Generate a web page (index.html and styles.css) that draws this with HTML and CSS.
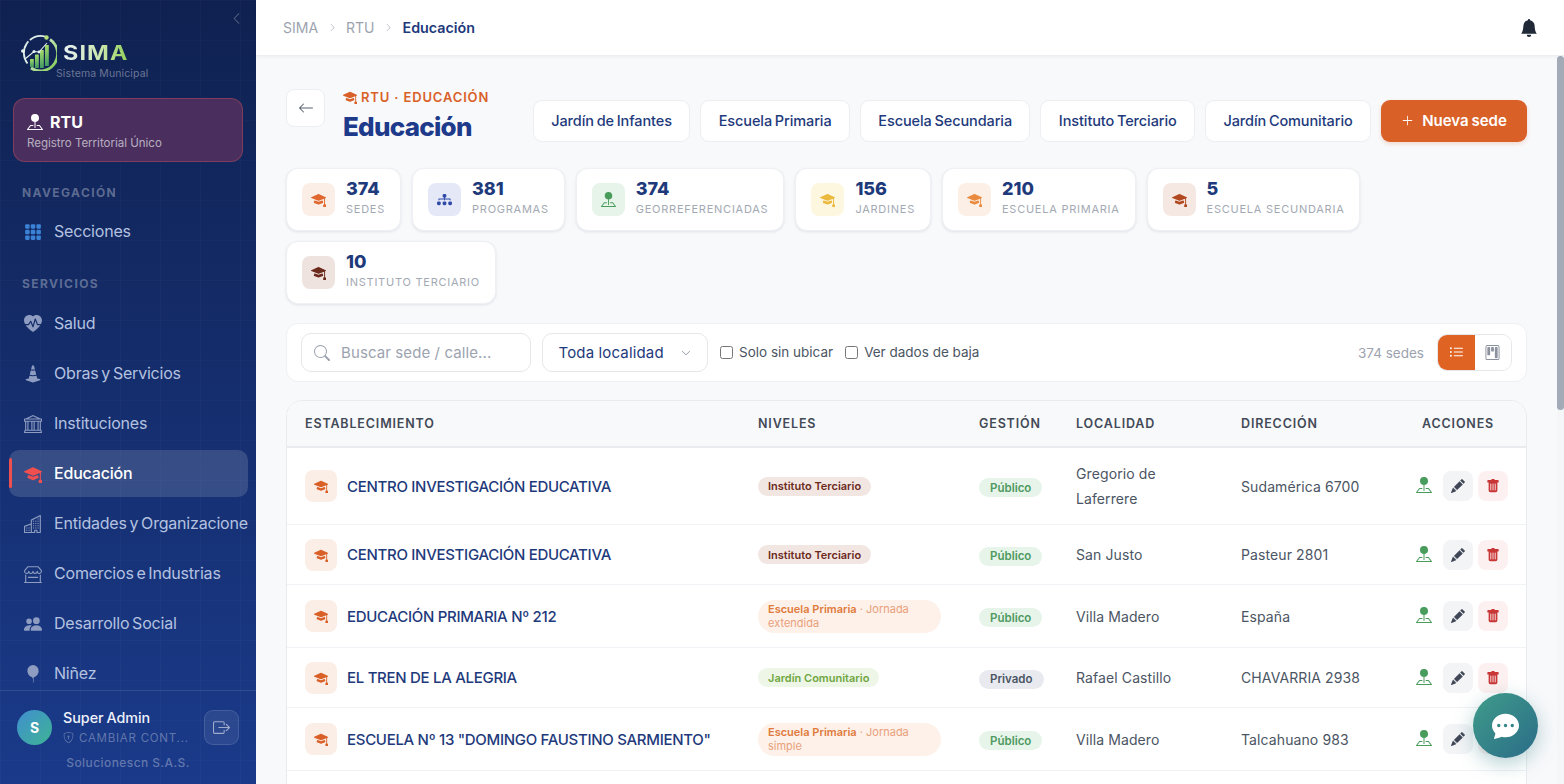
FILE: index.html
```html
<!DOCTYPE html>
<html lang="es">
<head>
<meta charset="utf-8">
<title>SIMA - Educación</title>
<link rel="stylesheet" href="styles.css">
</head>
<body>
<svg class="sprite" xmlns="http://www.w3.org/2000/svg" aria-hidden="true">
<defs>
<symbol id="i-cap" viewBox="0 0 16 16"><path d="M8.211 2.047a.5.5 0 0 0-.422 0l-7.5 3.5a.5.5 0 0 0 .025.917l7.5 3a.5.5 0 0 0 .372 0L14 7.14V13a1 1 0 0 0-1 1v2h3v-2a1 1 0 0 0-1-1V6.739l.686-.275a.5.5 0 0 0 .025-.917z"/><path d="M4.176 9.032a.5.5 0 0 0-.656.327l-.5 1.7a.5.5 0 0 0 .294.605l4.5 1.8a.5.5 0 0 0 .372 0l4.5-1.8a.5.5 0 0 0 .294-.605l-.5-1.7a.5.5 0 0 0-.656-.327L8 10.466z"/></symbol>
<symbol id="i-pin" viewBox="0 0 16 16"><path fill-rule="evenodd" d="M3.1 11.2a.5.5 0 0 1 .4-.2H6a.5.5 0 0 1 0 1H3.75L1.5 15h13l-2.25-3H10a.5.5 0 0 1 0-1h2.5a.5.5 0 0 1 .4.2l3 4a.5.5 0 0 1-.4.8H.5a.5.5 0 0 1-.4-.8z"/><path fill-rule="evenodd" d="M4 4a4 4 0 1 1 4.5 3.969V13.5a.5.5 0 0 1-1 0V7.97A4 4 0 0 1 4 3.999z"/></symbol>
<symbol id="i-pencil" viewBox="0 0 16 16"><path d="M12.854.146a.5.5 0 0 0-.707 0L10.5 1.793 14.207 5.5l1.647-1.646a.5.5 0 0 0 0-.708zm.646 6.061L9.793 2.5 3.293 9H3.5a.5.5 0 0 1 .5.5v.5h.5a.5.5 0 0 1 .5.5v.5h.5a.5.5 0 0 1 .5.5v.5h.5a.5.5 0 0 1 .5.5v.207zm-7.468 7.468A.5.5 0 0 1 6 13.5V13h-.5a.5.5 0 0 1-.5-.5V12h-.5a.5.5 0 0 1-.5-.5V11h-.5a.5.5 0 0 1-.5-.5V10h-.5a.5.5 0 0 1-.175-.032l-.179.178a.5.5 0 0 0-.11.168l-2 5a.5.5 0 0 0 .65.65l5-2a.5.5 0 0 0 .168-.11z"/></symbol>
<symbol id="i-trash" viewBox="0 0 16 16"><path d="M2.5 1a1 1 0 0 0-1 1v1a1 1 0 0 0 1 1H3v9a2 2 0 0 0 2 2h6a2 2 0 0 0 2-2V4h.5a1 1 0 0 0 1-1V2a1 1 0 0 0-1-1H10a1 1 0 0 0-1-1H7a1 1 0 0 0-1 1zm3 4a.5.5 0 0 1 .5.5v7a.5.5 0 0 1-1 0v-7a.5.5 0 0 1 .5-.5M8 5a.5.5 0 0 1 .5.5v7a.5.5 0 0 1-1 0v-7A.5.5 0 0 1 8 5m3 .5v7a.5.5 0 0 1-1 0v-7a.5.5 0 0 1 1 0"/></symbol>
<symbol id="i-bell" viewBox="0 0 16 16"><path d="M8 16a2 2 0 0 0 2-2H6a2 2 0 0 0 2 2m.995-14.901a1 1 0 1 0-1.99 0A5 5 0 0 0 3 6c0 1.098-.5 6-2 7h14c-1.5-1-2-5.902-2-7 0-2.42-1.72-4.44-4.005-4.901"/></symbol>
<symbol id="i-grid" viewBox="0 0 16 16"><rect x="1" y="1" width="4" height="4" rx="1"/><rect x="6" y="1" width="4" height="4" rx="1"/><rect x="11" y="1" width="4" height="4" rx="1"/><rect x="1" y="6" width="4" height="4" rx="1"/><rect x="6" y="6" width="4" height="4" rx="1"/><rect x="11" y="6" width="4" height="4" rx="1"/><rect x="1" y="11" width="4" height="4" rx="1"/><rect x="6" y="11" width="4" height="4" rx="1"/><rect x="11" y="11" width="4" height="4" rx="1"/></symbol>
<symbol id="i-heart" viewBox="0 0 16 16"><path d="M1.475 9C2.702 10.84 4.779 12.871 8 15c3.221-2.129 5.298-4.16 6.525-6H12a.5.5 0 0 1-.464-.314l-1.457-3.642-1.598 5.593a.5.5 0 0 1-.945.049L5.889 6.568l-1.473 2.21A.5.5 0 0 1 4 9z"/><path d="M.88 8C-2.427 1.68 4.41-2 7.823 1.143q.09.083.176.171a3 3 0 0 1 .176-.17C11.59-2 18.426 1.68 15.12 8h-2.783l-1.874-4.686a.5.5 0 0 0-.945.049L7.921 8.956 6.464 5.314a.5.5 0 0 0-.88-.091L3.732 8z"/></symbol>
<symbol id="i-cone" viewBox="0 0 16 16"><path d="m9.97 4.88.953 3.811C10.159 8.88 9.14 9 8 9s-2.158-.12-2.923-.309L6.03 4.88C6.635 4.957 7.3 5 8 5s1.365-.043 1.97-.12m-.245-.978L8.97.88C8.718-.13 7.282-.13 7.03.88L6.275 3.9C6.8 3.965 7.382 4 8 4s1.2-.036 1.725-.098m4.396 8.613a.5.5 0 0 1 .037.96l-6 2a.5.5 0 0 1-.316 0l-6-2a.5.5 0 0 1 .037-.96l2.391-.598.565-2.257c.862.212 1.964.339 3.165.339s2.303-.127 3.165-.339l.565 2.257z"/></symbol>
<symbol id="i-bank" viewBox="0 0 16 16"><path d="m8 0 6.61 3h.89a.5.5 0 0 1 .5.5v2a.5.5 0 0 1-.5.5H15v7a.5.5 0 0 1 .485.38l.5 2a.498.498 0 0 1-.485.62H.5a.498.498 0 0 1-.485-.62l.5-2A.5.5 0 0 1 1 13V6H.5a.5.5 0 0 1-.5-.5v-2A.5.5 0 0 1 .5 3h.89zM3.777 3h8.447L8 1zM2 6v7h1V6zm2 0v7h2.5V6zm3.5 0v7h1V6zm2 0v7H12V6zM13 6v7h1V6zm2-1V4H1v1zm-.39 9H1.39l-.25 1h13.72z"/></symbol>
<symbol id="i-buildings" viewBox="0 0 16 16"><path d="M14.763.075A.5.5 0 0 1 15 .5v15a.5.5 0 0 1-.5.5h-3a.5.5 0 0 1-.5-.5V14h-1v1.5a.5.5 0 0 1-.5.5h-9a.5.5 0 0 1-.5-.5V10a.5.5 0 0 1 .342-.474L6 7.64V4.5a.5.5 0 0 1 .276-.447l8-4a.5.5 0 0 1 .487.022M6 8.694 1 10.36V15h5zM7 15h2v-1.5a.5.5 0 0 1 .5-.5h2a.5.5 0 0 1 .5.5V15h2V1.309l-7 3.5z"/><path d="M2 11h1v1H2zm2 0h1v1H4zm-2 2h1v1H2zm2 0h1v1H4zm4-4h1v1H8zm2 0h1v1h-1zm-2 2h1v1H8zm2 0h1v1h-1zm2-2h1v1h-1zm0 2h1v1h-1zM8 7h1v1H8zm2 0h1v1h-1zm2 0h1v1h-1zM8 5h1v1H8zm2 0h1v1h-1zm2 0h1v1h-1zm0-2h1v1h-1z"/></symbol>
<symbol id="i-shop" viewBox="0 0 16 16"><path d="M2.97 1.35A1 1 0 0 1 3.73 1h8.54a1 1 0 0 1 .76.35l2.609 3.044A1.5 1.5 0 0 1 16 5.37v.255a2.375 2.375 0 0 1-4.25 1.458A2.37 2.37 0 0 1 9.875 8 2.37 2.37 0 0 1 8 7.083 2.37 2.37 0 0 1 6.125 8a2.37 2.37 0 0 1-1.875-.917A2.375 2.375 0 0 1 0 5.625V5.37a1.5 1.5 0 0 1 .361-.976zm1.78 4.275a1.375 1.375 0 0 0 2.75 0 .5.5 0 0 1 1 0 1.375 1.375 0 0 0 2.75 0 .5.5 0 0 1 1 0 1.375 1.375 0 1 0 2.75 0V5.37a.5.5 0 0 0-.12-.325L12.27 2H3.73L1.12 5.045A.5.5 0 0 0 1 5.37v.255a1.375 1.375 0 0 0 2.75 0 .5.5 0 0 1 1 0M1.5 8.5A.5.5 0 0 1 2 9v6h12V9a.5.5 0 0 1 1 0v6h.5a.5.5 0 0 1 0 1H.5a.5.5 0 0 1 0-1H1V9a.5.5 0 0 1 .5-.5"/><path d="M3.5 10.5h9v1h-9z"/></symbol>
<symbol id="i-people" viewBox="0 0 16 16"><path d="M7 14s-1 0-1-1 1-4 5-4 5 3 5 4-1 1-1 1zm4-6a3 3 0 1 0 0-6 3 3 0 0 0 0 6m-5.784 6A2.24 2.24 0 0 1 5 13c0-1.355.68-2.75 1.936-3.72A6.3 6.3 0 0 0 5 9c-4 0-5 3-5 4s1 1 1 1zM4.5 8a2.5 2.5 0 1 0 0-5 2.5 2.5 0 0 0 0 5"/></symbol>
<symbol id="i-balloon" viewBox="0 0 16 16"><path fill-rule="evenodd" d="M8.48 10.901C11.21 10.227 13 7.837 13 5A5 5 0 0 0 3 5c0 2.837 1.79 5.227 4.52 5.901l-.244.487a.25.25 0 1 0 .448.224l.04-.08c.009.17.024.315.051.45.068.344.208.622.448 1.102l.013.028c.212.422.182.85.05 1.246-.135.402-.366.751-.534 1.003a.25.25 0 0 0 .416.278l.004-.007c.166-.248.431-.646.588-1.115.16-.479.212-1.051-.076-1.629-.258-.515-.365-.732-.419-1.004a2 2 0 0 1-.037-.289l.008.017a.25.25 0 1 0 .448-.224z"/></symbol>
<symbol id="i-diagram" viewBox="0 0 16 16"><path fill-rule="evenodd" d="M6 3.5A1.5 1.5 0 0 1 7.5 2h1A1.5 1.5 0 0 1 10 3.5v1A1.5 1.5 0 0 1 8.5 6v1H14a.5.5 0 0 1 .5.5v1a.5.5 0 0 1-1 0V8h-5v.5a.5.5 0 0 1-1 0V8h-5v.5a.5.5 0 0 1-1 0v-1A.5.5 0 0 1 2 7h5.5V6A1.5 1.5 0 0 1 6 4.5zm-6 8A1.5 1.5 0 0 1 1.5 10h1A1.5 1.5 0 0 1 4 11.5v1A1.5 1.5 0 0 1 2.5 14h-1A1.5 1.5 0 0 1 0 12.5zm6 0A1.5 1.5 0 0 1 7.5 10h1a1.5 1.5 0 0 1 1.5 1.5v1A1.5 1.5 0 0 1 8.5 14h-1A1.5 1.5 0 0 1 6 12.5zm6 0a1.5 1.5 0 0 1 1.5-1.5h1a1.5 1.5 0 0 1 1.5 1.5v1a1.5 1.5 0 0 1-1.5 1.5h-1a1.5 1.5 0 0 1-1.5-1.5z"/></symbol>
<symbol id="i-list" viewBox="0 0 16 16"><path fill-rule="evenodd" d="M5 11.5a.5.5 0 0 1 .5-.5h9a.5.5 0 0 1 0 1h-9a.5.5 0 0 1-.5-.5m0-4a.5.5 0 0 1 .5-.5h9a.5.5 0 0 1 0 1h-9a.5.5 0 0 1-.5-.5m0-4a.5.5 0 0 1 .5-.5h9a.5.5 0 0 1 0 1h-9a.5.5 0 0 1-.5-.5m-3 1a1 1 0 1 0 0-2 1 1 0 0 0 0 2m0 4a1 1 0 1 0 0-2 1 1 0 0 0 0 2m0 4a1 1 0 1 0 0-2 1 1 0 0 0 0 2"/></symbol>
<symbol id="i-kanban" viewBox="0 0 16 16"><path d="M13.5 1a1 1 0 0 1 1 1v12a1 1 0 0 1-1 1h-11a1 1 0 0 1-1-1V2a1 1 0 0 1 1-1zm-11-1a2 2 0 0 0-2 2v12a2 2 0 0 0 2 2h11a2 2 0 0 0 2-2V2a2 2 0 0 0-2-2z"/><path d="M6.5 3a1 1 0 0 1 1-1h1a1 1 0 0 1 1 1v3a1 1 0 0 1-1 1h-1a1 1 0 0 1-1-1zm-4 0a1 1 0 0 1 1-1h1a1 1 0 0 1 1 1v7a1 1 0 0 1-1 1h-1a1 1 0 0 1-1-1zm8 0a1 1 0 0 1 1-1h1a1 1 0 0 1 1 1v10a1 1 0 0 1-1 1h-1a1 1 0 0 1-1-1z"/></symbol>
<symbol id="i-logout" viewBox="0 0 16 16"><path fill-rule="evenodd" d="M10 12.5a.5.5 0 0 1-.5.5h-8a.5.5 0 0 1-.5-.5v-9a.5.5 0 0 1 .5-.5h8a.5.5 0 0 1 .5.5v2a.5.5 0 0 0 1 0v-2A1.5 1.5 0 0 0 9.5 2h-8A1.5 1.5 0 0 0 0 3.5v9A1.5 1.5 0 0 0 1.5 14h8a1.5 1.5 0 0 0 1.5-1.5v-2a.5.5 0 0 0-1 0z"/><path fill-rule="evenodd" d="M15.854 8.354a.5.5 0 0 0 0-.708l-3-3a.5.5 0 0 0-.708.708L14.293 7.5H5.5a.5.5 0 0 0 0 1h8.793l-2.147 2.146a.5.5 0 0 0 .708.708z"/></symbol>
<symbol id="i-shield" viewBox="0 0 16 16"><path d="M5.338 1.59a61 61 0 0 0-2.837.856.48.48 0 0 0-.328.39c-.554 4.157.726 7.19 2.253 9.188a10.7 10.7 0 0 0 2.287 2.233c.346.244.652.42.893.533q.18.085.293.118a1 1 0 0 0 .101.025 1 1 0 0 0 .1-.025q.114-.034.294-.118c.24-.113.547-.29.893-.533a10.7 10.7 0 0 0 2.287-2.233c1.527-1.997 2.807-5.031 2.253-9.188a.48.48 0 0 0-.328-.39c-.651-.213-1.75-.56-2.837-.855C9.552 1.29 8.531 1.067 8 1.067c-.53 0-1.552.223-2.662.524zM5.072.56C6.157.265 7.31 0 8 0s1.843.265 2.928.56c1.11.3 2.229.655 2.887.87a1.54 1.54 0 0 1 1.044 1.262c.596 4.477-.787 7.795-2.465 9.99a11.8 11.8 0 0 1-2.517 2.453 7 7 0 0 1-1.048.625c-.28.132-.581.24-.829.24s-.548-.108-.829-.24a7 7 0 0 1-1.048-.625 11.8 11.8 0 0 1-2.517-2.453C1.928 10.487.545 7.169 1.141 2.692A1.54 1.54 0 0 1 2.185 1.43 63 63 0 0 1 5.072.56"/><path d="M9.5 6.5a1.5 1.5 0 0 1-1 1.415l.385 1.99a.5.5 0 0 1-.491.595h-.788a.5.5 0 0 1-.49-.595l.384-1.99a1.5 1.5 0 1 1 2-1.415"/></symbol>
<symbol id="i-chat" viewBox="0 0 16 16"><path d="M16 8c0 3.866-3.582 7-8 7a9 9 0 0 1-2.347-.306c-.584.296-1.925.864-4.181 1.234-.2.032-.352-.176-.273-.362.354-.836.674-1.95.77-2.966C.744 11.37 0 9.76 0 8c0-3.866 3.582-7 8-7s8 3.134 8 7M5 8a1 1 0 1 0-2 0 1 1 0 0 0 2 0m4 0a1 1 0 1 0-2 0 1 1 0 0 0 2 0m3 1a1 1 0 1 0 0-2 1 1 0 0 0 0 2"/></symbol>
<symbol id="i-back" viewBox="0 0 16 16"><path fill-rule="evenodd" d="M15 8a.5.5 0 0 0-.5-.5H2.707l3.147-3.146a.5.5 0 1 0-.708-.708l-4 4a.5.5 0 0 0 0 .708l4 4a.5.5 0 0 0 .708-.708L2.707 8.5H14.5A.5.5 0 0 0 15 8"/></symbol>
<symbol id="i-plus" viewBox="0 0 16 16"><path fill-rule="evenodd" d="M8 2a.5.5 0 0 1 .5.5v5h5a.5.5 0 0 1 0 1h-5v5a.5.5 0 0 1-1 0v-5h-5a.5.5 0 0 1 0-1h5v-5A.5.5 0 0 1 8 2"/></symbol>
<symbol id="i-search" viewBox="0 0 16 16"><path d="M11.742 10.344a6.5 6.5 0 1 0-1.397 1.398h-.001q.044.06.098.115l3.85 3.85a1 1 0 0 0 1.415-1.414l-3.85-3.85a1 1 0 0 0-.115-.1zM12 6.5a5.5 5.5 0 1 1-11 0 5.5 5.5 0 0 1 11 0"/></symbol>
<symbol id="i-left" viewBox="0 0 16 16"><path fill-rule="evenodd" d="M11.354 1.646a.5.5 0 0 1 0 .708L5.707 8l5.647 5.646a.5.5 0 0 1-.708.708l-6-6a.5.5 0 0 1 0-.708l6-6a.5.5 0 0 1 .708 0"/></symbol>
<symbol id="i-right" viewBox="0 0 16 16"><path fill-rule="evenodd" d="M4.646 1.646a.5.5 0 0 1 .708 0l6 6a.5.5 0 0 1 0 .708l-6 6a.5.5 0 0 1-.708-.708L10.293 8 4.646 2.354a.5.5 0 0 1 0-.708"/></symbol>
<symbol id="i-down" viewBox="0 0 16 16"><path fill-rule="evenodd" d="M1.646 4.646a.5.5 0 0 1 .708 0L8 10.293l5.646-5.647a.5.5 0 0 1 .708.708l-6 6a.5.5 0 0 1-.708 0l-6-6a.5.5 0 0 1 0-.708"/></symbol>
</defs>
</svg>

<div class="app">
<aside class="sidebar">
  <div class="side-top">
    <button class="collapse"><svg class="ico"><use href="#i-left"/></svg></button>
    <div class="brand">
      <svg class="brand-mark" viewBox="0 0 36 38" xmlns="http://www.w3.org/2000/svg">
        <defs><linearGradient id="ringg" x1="0" y1="0" x2="1" y2="1"><stop offset="0" stop-color="#e6f3ee"/><stop offset="1" stop-color="#7cc84a"/></linearGradient><linearGradient id="barg" x1="0" y1="0" x2="0" y2="1"><stop offset="0" stop-color="#a6dc6a"/><stop offset="1" stop-color="#3f9a63"/></linearGradient></defs>
        <path d="M6.5 30.5A17 17 0 0 1 24 3.5" fill="none" stroke="#dfeee8" stroke-width="1.8" stroke-dasharray="24 2 40"/>
        <path d="M29 6.5A17 17 0 0 1 10 35" fill="none" stroke="url(#ringg)" stroke-width="2.8"/>
        <circle cx="25.5" cy="4.5" r="2.2" fill="#b7e07a"/><circle cx="1.8" cy="18" r="1.8" fill="#e6f3ee"/>
        <rect x="9" y="26" width="3.8" height="8" rx=".5" fill="url(#barg)"/>
        <rect x="14" y="21.5" width="3.8" height="13.5" rx=".5" fill="url(#barg)"/>
        <rect x="19" y="17" width="3.8" height="18" rx=".5" fill="url(#barg)"/>
        <rect x="24" y="12" width="3.8" height="21" rx=".5" fill="url(#barg)"/>
        <path d="M4 26 13 18.5l5 .5 8-9" fill="none" stroke="#e6f3ee" stroke-width="1.1"/>
        <circle cx="13" cy="18.5" r="1.5" fill="#e6f3ee"/><circle cx="18" cy="19" r="1.4" fill="#e6f3ee"/>
      </svg>
      <div class="brand-text">
        <span class="brand-name">SIMA</span>
        <span class="brand-sub">Sistema Municipal</span>
      </div>
    </div>
  </div>
  <div class="rtu-box">
    <div class="rtu-title"><svg class="ico rtu-ico"><use href="#i-pin"/></svg>RTU</div>
    <div class="rtu-sub">Registro Territorial Único</div>
  </div>
  <nav class="nav">
    <div class="nav-label">NAVEGACIÓN</div>
    <a class="nav-item"><svg class="ico nav-ico grid-ico"><use href="#i-grid"/></svg>Secciones</a>
    <div class="nav-label services">SERVICIOS</div>
    <div class="nav-list">
      <a class="nav-item"><svg class="ico nav-ico"><use href="#i-heart"/></svg>Salud</a>
      <a class="nav-item"><svg class="ico nav-ico"><use href="#i-cone"/></svg>Obras y Servicios</a>
      <a class="nav-item"><svg class="ico nav-ico"><use href="#i-bank"/></svg>Instituciones</a>
      <a class="nav-item active"><svg class="ico nav-ico"><use href="#i-cap"/></svg>Educación</a>
      <a class="nav-item"><svg class="ico nav-ico"><use href="#i-buildings"/></svg>Entidades y Organizaciones</a>
      <a class="nav-item"><svg class="ico nav-ico"><use href="#i-shop"/></svg>Comercios e Industrias</a>
      <a class="nav-item"><svg class="ico nav-ico"><use href="#i-people"/></svg>Desarrollo Social</a>
      <a class="nav-item"><svg class="ico nav-ico"><use href="#i-balloon"/></svg>Niñez</a>
    </div>
  </nav>
  <div class="side-foot">
    <div class="user-row">
      <div class="avatar">S</div>
      <div class="user-info">
        <div class="user-name">Super Admin</div>
        <div class="user-pass"><svg class="ico"><use href="#i-shield"/></svg><span>CAMBIAR CONT...</span></div>
      </div>
      <button class="logout"><svg class="ico"><use href="#i-logout"/></svg></button>
    </div>
    <div class="company">Solucionescn S.A.S.</div>
  </div>
</aside>

<div class="main">
  <header class="topbar">
    <div class="crumbs">
      <span>SIMA</span><svg class="ico"><use href="#i-right"/></svg>
      <span>RTU</span><svg class="ico"><use href="#i-right"/></svg>
      <span class="crumb-now">Educación</span>
    </div>
    <svg class="ico bell"><use href="#i-bell"/></svg>
  </header>

  <div class="scroller">
  <main class="content">
    <div class="page-head">
      <button class="back"><svg class="ico"><use href="#i-back"/></svg></button>
      <div class="titles">
        <div class="eyebrow"><svg class="ico"><use href="#i-cap"/></svg>RTU · EDUCACIÓN</div>
        <h1>Educación</h1>
      </div>
      <div class="chips">
        <button class="chip">Jardín de Infantes</button>
        <button class="chip">Escuela Primaria</button>
        <button class="chip">Escuela Secundaria</button>
        <button class="chip">Instituto Terciario</button>
        <button class="chip">Jardín Comunitario</button>
        <button class="primary"><svg class="ico"><use href="#i-plus"/></svg>Nueva sede</button>
      </div>
    </div>

    <section class="stats">
      <div class="stat"><div class="stat-ico c-orange"><svg class="ico"><use href="#i-cap"/></svg></div><div class="stat-text"><div class="stat-num">374</div><div class="stat-lbl">SEDES</div></div></div>
      <div class="stat"><div class="stat-ico c-blue"><svg class="ico"><use href="#i-diagram"/></svg></div><div class="stat-text"><div class="stat-num">381</div><div class="stat-lbl">PROGRAMAS</div></div></div>
      <div class="stat"><div class="stat-ico c-green"><svg class="ico"><use href="#i-pin"/></svg></div><div class="stat-text"><div class="stat-num">374</div><div class="stat-lbl">GEORREFERENCIADAS</div></div></div>
      <div class="stat"><div class="stat-ico c-yellow"><svg class="ico"><use href="#i-cap"/></svg></div><div class="stat-text"><div class="stat-num">156</div><div class="stat-lbl">JARDINES</div></div></div>
      <div class="stat"><div class="stat-ico c-peach"><svg class="ico"><use href="#i-cap"/></svg></div><div class="stat-text"><div class="stat-num">210</div><div class="stat-lbl">ESCUELA PRIMARIA</div></div></div>
      <div class="stat"><div class="stat-ico c-rust"><svg class="ico"><use href="#i-cap"/></svg></div><div class="stat-text"><div class="stat-num">5</div><div class="stat-lbl">ESCUELA SECUNDARIA</div></div></div>
      <div class="stat"><div class="stat-ico c-brown"><svg class="ico"><use href="#i-cap"/></svg></div><div class="stat-text"><div class="stat-num">10</div><div class="stat-lbl">INSTITUTO TERCIARIO</div></div></div>
    </section>

    <section class="filters">
      <label class="search"><svg class="ico"><use href="#i-search"/></svg><input type="text" placeholder="Buscar sede / calle..."></label>
      <div class="select"><span>Toda localidad</span><svg class="ico"><use href="#i-down"/></svg></div>
      <label class="check"><input type="checkbox">Solo sin ubicar</label>
      <label class="check"><input type="checkbox">Ver dados de baja</label>
      <span class="count">374 sedes</span>
      <div class="toggle"><button class="tg on"><svg class="ico"><use href="#i-list"/></svg></button><button class="tg"><svg class="ico"><use href="#i-kanban"/></svg></button></div>
    </section>

    <section class="table-card">
      <table>
        <colgroup><col class="c1"><col class="c2"><col class="c3"><col class="c4"><col class="c5"><col class="c6"></colgroup>
        <thead><tr><th>ESTABLECIMIENTO</th><th>NIVELES</th><th>GESTIÓN</th><th>LOCALIDAD</th><th>DIRECCIÓN</th><th>ACCIONES</th></tr></thead>
        <tbody>
          <tr>
            <td><div class="est"><span class="est-ico"><svg class="ico"><use href="#i-cap"/></svg></span><span class="est-name">CENTRO INVESTIGACIÓN EDUCATIVA</span></div></td>
            <td><div class="lvl-wrap"><span class="badge b-ter">Instituto Terciario</span></div></td>
            <td><span class="badge b-pub">Público</span></td>
            <td class="tight">Gregorio de Laferrere</td>
            <td>Sudamérica 6700</td>
            <td class="acts"><div class="act-row"><svg class="ico act-pin"><use href="#i-pin"/></svg><button class="act edit"><svg class="ico"><use href="#i-pencil"/></svg></button><button class="act del"><svg class="ico"><use href="#i-trash"/></svg></button></div></td>
          </tr>
          <tr>
            <td><div class="est"><span class="est-ico"><svg class="ico"><use href="#i-cap"/></svg></span><span class="est-name">CENTRO INVESTIGACIÓN EDUCATIVA</span></div></td>
            <td><div class="lvl-wrap"><span class="badge b-ter">Instituto Terciario</span></div></td>
            <td><span class="badge b-pub">Público</span></td>
            <td>San Justo</td>
            <td>Pasteur 2801</td>
            <td class="acts"><div class="act-row"><svg class="ico act-pin"><use href="#i-pin"/></svg><button class="act edit"><svg class="ico"><use href="#i-pencil"/></svg></button><button class="act del"><svg class="ico"><use href="#i-trash"/></svg></button></div></td>
          </tr>
          <tr>
            <td><div class="est"><span class="est-ico"><svg class="ico"><use href="#i-cap"/></svg></span><span class="est-name">EDUCACIÓN PRIMARIA Nº 212</span></div></td>
            <td><div class="lvl-wrap"><span class="badge b-pri"><b>Escuela Primaria</b> · Jornada extendida</span></div></td>
            <td><span class="badge b-pub">Público</span></td>
            <td>Villa Madero</td>
            <td>España</td>
            <td class="acts"><div class="act-row"><svg class="ico act-pin"><use href="#i-pin"/></svg><button class="act edit"><svg class="ico"><use href="#i-pencil"/></svg></button><button class="act del"><svg class="ico"><use href="#i-trash"/></svg></button></div></td>
          </tr>
          <tr>
            <td><div class="est"><span class="est-ico"><svg class="ico"><use href="#i-cap"/></svg></span><span class="est-name">EL TREN DE LA ALEGRIA</span></div></td>
            <td><div class="lvl-wrap"><span class="badge b-jar">Jardín Comunitario</span></div></td>
            <td><span class="badge b-pri2">Privado</span></td>
            <td>Rafael Castillo</td>
            <td>CHAVARRIA 2938</td>
            <td class="acts"><div class="act-row"><svg class="ico act-pin"><use href="#i-pin"/></svg><button class="act edit"><svg class="ico"><use href="#i-pencil"/></svg></button><button class="act del"><svg class="ico"><use href="#i-trash"/></svg></button></div></td>
          </tr>
          <tr>
            <td><div class="est"><span class="est-ico"><svg class="ico"><use href="#i-cap"/></svg></span><span class="est-name">ESCUELA Nº 13 "DOMINGO FAUSTINO SARMIENTO"</span></div></td>
            <td><div class="lvl-wrap"><span class="badge b-pri"><b>Escuela Primaria</b> · Jornada simple</span></div></td>
            <td><span class="badge b-pub">Público</span></td>
            <td>Villa Madero</td>
            <td>Talcahuano 983</td>
            <td class="acts"><div class="act-row"><svg class="ico act-pin"><use href="#i-pin"/></svg><button class="act edit"><svg class="ico"><use href="#i-pencil"/></svg></button><button class="act del"><svg class="ico"><use href="#i-trash"/></svg></button></div></td>
          </tr>
        </tbody>
      </table>
    </section>
  </main>
  <div class="rail"><div class="thumb"></div></div>
  </div>
</div>
</div>
<button class="fab"><svg class="ico"><use href="#i-chat"/></svg></button>
</body>
</html>
```

FILE: styles.css
```css
* { box-sizing: border-box; }
html, body { margin: 0; height: 100%; overflow: hidden; }
body { font-family: "Inter", "Liberation Sans", sans-serif; color: #1e3a7b; background: #f8f9fb; }
button { font: inherit; cursor: pointer; }
.sprite { width: 0; height: 0; position: absolute; }
.ico { width: 1em; height: 1em; fill: currentColor; flex: none; display: block; }

.app { display: flex; height: 100vh; }

/* Sidebar */
.sidebar {
  width: 256px; flex: none; display: flex; flex-direction: column; overflow: hidden;
  background-color: #122758;
  background-image:
    linear-gradient(rgba(255,255,255,.02) 1px, transparent 1px),
    linear-gradient(90deg, rgba(255,255,255,.02) 1px, transparent 1px),
    linear-gradient(180deg, #0f2150 0%, #1a3a8a 100%);
  background-size: 40px 40px, 40px 40px, 100% 100%;
}
.side-top { height: 98px; flex: none; padding: 10px 13px 0 21px; }
.collapse { display: block; margin-left: auto; padding: 0; background: none; border: 0; color: rgba(255,255,255,.3); font-size: 13px; height: 16px; width: 13px; }
.brand { display: flex; margin-top: 7px; align-items: flex-start; }
.brand-mark { width: 36px; height: 38px; flex: none; }
.brand-text { display: flex; flex-direction: column; margin-left: -1px; }
.brand-name {
  font-size: 19.5px; line-height: 26px; font-weight: 700; letter-spacing: .9px; margin: 7px 0 0 7px;
  background: linear-gradient(90deg, #e8f1f5 0%, #c9e6a8 60%, #8fcf55 100%);
  -webkit-background-clip: text; background-clip: text; color: transparent; align-self: flex-start;
  transform: scaleX(1.2); transform-origin: left center;
}
.brand-sub { font-size: 10.5px; line-height: 14px; letter-spacing: .12px; margin-top: 1px; color: rgba(255,255,255,.38); white-space: nowrap; }

.rtu-box { flex: none; margin: 0 13px; height: 64px; padding: 12px 13px 0; border-radius: 12px; background: #4a2f5e; border: 1px solid rgba(239,90,90,.32); }
.rtu-title { display: flex; align-items: center; gap: 7px; color: #fff; font-size: 16px; line-height: 22px; font-weight: 700; }
.rtu-ico { font-size: 16px; }
.rtu-sub { font-size: 11.5px; line-height: 18px; color: rgba(255,255,255,.62); margin-top: 1px; }

.nav { flex: 1; min-height: 0; overflow: hidden; padding: 0 8px 0 9px; }
.nav-label { height: 16px; line-height: 16px; margin: 23px 0 7px 13px; font-size: 12px; font-weight: 700; letter-spacing: 1.4px; color: rgba(255,255,255,.32); }
.nav-label.services { margin-top: 21px; margin-bottom: 8px; }
.nav-list { display: flex; flex-direction: column; gap: 3px; }
.nav-item {
  position: relative; display: flex; align-items: center; gap: 12px; height: 47px; padding: 0 0 2px 15px; border-radius: 10px;
  font-size: 16px; font-weight: 400; color: #b4c2e0; white-space: nowrap; overflow: hidden; word-spacing: -1.5px; letter-spacing: -.2px;
}
.nav-ico { font-size: 18px; color: #8d9cc0; margin-top: 2px; }
.grid-ico { color: #3b82d6; }
.nav-item.active { background: rgba(255,255,255,.14); color: #fff; font-weight: 500; }
.nav-item.active .nav-ico { color: #ef4f4f; }
.nav-item.active::before { content: ""; position: absolute; left: 0; top: 8px; width: 3px; height: 30px; background: #ef4f4f; border-radius: 2px; }

.side-foot { flex: none; height: 94px; border-top: 1px solid rgba(255,255,255,.1); padding: 19px 17px 0; }
.user-row { display: flex; align-items: center; height: 35px; }
.avatar { width: 35px; height: 35px; border-radius: 50%; flex: none; display: flex; align-items: center; justify-content: center; color: #fff; font-size: 14px; font-weight: 700; background: linear-gradient(135deg, #3f8fd0, #3fb394); }
.user-info { margin: -3px 0 0 11px; min-width: 0; }
.user-name { font-size: 14.3px; line-height: 19px; font-weight: 500; color: #eef2fb; word-spacing: -1px; }
.user-pass { display: flex; align-items: center; gap: 5px; margin-top: 4px; font-size: 11.5px; line-height: 14px; letter-spacing: .75px; color: rgba(255,255,255,.32); white-space: nowrap; }
.user-pass .ico { font-size: 11px; }
.logout { margin-left: auto; width: 35px; height: 35px; flex: none; border-radius: 9px; background: rgba(255,255,255,.08); border: 1px solid rgba(255,255,255,.12); color: rgba(255,255,255,.55); display: flex; align-items: center; justify-content: center; font-size: 17px; padding: 0; }
.company { margin-top: 10px; text-align: center; font-size: 12px; line-height: 16px; font-weight: 500; letter-spacing: .42px; color: rgba(255,255,255,.32); }

/* Main */
.main { flex: 1; min-width: 0; display: flex; flex-direction: column; }
.topbar { height: 56px; flex: none; background: #fff; border-bottom: 1px solid #eceef2; box-shadow: 0 1px 3px rgba(20,30,60,.05); display: flex; align-items: center; padding: 0 26px 0 27px; position: relative; z-index: 2; }
.crumbs { display: flex; align-items: center; color: #9ca3af; font-size: 14px; gap: 9.5px; }
.crumbs .ico { font-size: 9px; color: #a9aeb8; }
.crumb-now { color: #1e3a7b; font-weight: 600; font-size: 14.3px; }
.bell { margin-left: auto; font-size: 18px; color: #1f2937; }

.scroller { flex: 1; min-height: 0; display: flex; }
.content { flex: 1; min-width: 0; overflow: hidden; padding: 33px 30px 30px; }
.rail { width: 7px; flex: none; background: #f5f6f8; }
.thumb { height: 354px; background: #a3aab8; border-radius: 4px; }

.page-head { display: flex; align-items: flex-start; margin-bottom: 19px; }
.back { width: 39px; height: 38px; flex: none; background: #fff; border: 1px solid #eceef2; border-radius: 8px; color: #5b6270; display: flex; align-items: center; justify-content: center; font-size: 16px; padding: 0; }
.titles { margin-left: 18px; }
.eyebrow { display: flex; align-items: center; gap: 4px; height: 16px; font-size: 13px; font-weight: 600; letter-spacing: .85px; color: #d96128; white-space: nowrap; }
.eyebrow .ico { font-size: 14px; }
h1 { margin: 0; font-size: 26px; line-height: 44px; font-weight: 800; color: #1e3a8a; letter-spacing: -.75px; white-space: nowrap; }
.chips { margin: 11px 0 0 auto; display: flex; gap: 10px; }
.chip { height: 42px; padding: 0 17.4px 2px; background: #fff; border: 1px solid #eceef2; border-radius: 9px; font-size: 14.5px; font-weight: 500; color: #1e3a7b; white-space: nowrap; letter-spacing: -.1px; word-spacing: -1px; }
.primary { height: 42px; width: 146px; border: 0; border-radius: 9px; background: #d96128; color: #fff; font-size: 15px; font-weight: 600; display: flex; align-items: center; justify-content: center; gap: 8px; box-shadow: 0 2px 4px rgba(217,97,40,.2); word-spacing: -1px; padding: 0 0 1px; }
.primary .ico { font-size: 13px; }

.stats { display: flex; flex-wrap: wrap; gap: 10px 11px; margin-bottom: 19px; }
.stat { height: 63px; display: flex; align-items: center; gap: 11px; padding: 0 15px; background: #fff; border: 1px solid #eff0f3; border-radius: 12px; box-shadow: 0 1px 3px rgba(20,30,60,.1); }
.stat-ico { width: 33px; height: 33px; border-radius: 8px; display: flex; align-items: center; justify-content: center; font-size: 15px; flex: none; }
.c-orange { background: #fbeee6; color: #e0682e; }
.c-blue { background: #e4e8f7; color: #2f4aa8; }
.c-green { background: #e6f4ea; color: #4a9c5d; }
.c-yellow { background: #fef7e0; color: #eab93d; }
.c-peach { background: #fcefe6; color: #ea8a3e; }
.c-rust { background: #f5e8e2; color: #b2481f; }
.c-brown { background: #eee3df; color: #6b2a1c; }
.stat-text { padding-bottom: 5px; }
.stat-num { font-size: 18px; line-height: 22px; font-weight: 800; color: #1e3a7b; margin-bottom: 2px; }
.stat-lbl { font-size: 11px; line-height: 14px; letter-spacing: .75px; color: #a3a9b3; white-space: nowrap; }

.filters { height: 59px; display: flex; align-items: center; padding: 0 14px; background: #fff; border: 1px solid #eff0f3; border-radius: 12px; margin-bottom: 18px; }
.search { width: 230px; height: 39px; display: flex; align-items: center; gap: 11px; padding: 0 12px; border: 1px solid #e5e7eb; border-radius: 10px; color: #9ca3af; font-size: 16px; }
.search input { border: 0; outline: 0; width: 160px; padding: 0; font: inherit; font-size: 15px; letter-spacing: .1px; background: none; color: #374151; }
.search input::placeholder { color: #9ca3af; opacity: 1; }
.select { width: 166px; height: 39px; margin-left: 11px; display: flex; align-items: center; justify-content: space-between; padding: 0 16px 0 15.5px; border: 1px solid #e5e7eb; border-radius: 10px; font-size: 15px; letter-spacing: .15px; color: #1e3a7b; }
.select .ico { font-size: 10px; color: #6b7280; }
.check { display: flex; align-items: center; gap: 6px; margin-left: 12px; padding-bottom: 1px; font-size: 13.5px; color: #4b5563; white-space: nowrap; }
.check input { margin: 0; width: 13px; height: 13px; }
.count { margin-left: auto; font-size: 13.5px; color: #9ca3af; }
.toggle { margin-left: 13px; display: flex; width: 75px; height: 37px; border: 1px solid #e5e7eb; border-radius: 10px; overflow: hidden; }
.tg { flex: 1; border: 0; padding: 0; background: #fff; color: #8b929e; font-size: 15px; display: flex; align-items: center; justify-content: center; }
.tg.on { background: #df6424; color: #fff; }

.table-card { background: #fff; border: 1px solid #e9ebef; border-radius: 16px; overflow: hidden; min-height: 1123px; }
table { width: 100%; border-collapse: separate; border-spacing: 0; table-layout: fixed; }
.c1 { width: 453px; } .c2 { width: 221px; } .c3 { width: 97px; } .c4 { width: 165px; } .c5 { width: 181px; } .c6 { width: 122px; }
th { height: 47px; padding: 0 18px; text-align: left; font-size: 12.5px; font-weight: 600; letter-spacing: .85px; color: #434a57; background: #f8f9fb; border-bottom: 2px solid #e9ebef; white-space: nowrap; }
td { padding: 13.5px 18px; font-size: 14px; line-height: 25px; color: #4b5563; border-bottom: 1px solid #f1f2f5; vertical-align: middle; letter-spacing: .1px; }
td.tight { padding-top: 13px; padding-bottom: 13px; }
.est { display: flex; align-items: center; gap: 10px; }
.est-ico { width: 32px; height: 32px; flex: none; border-radius: 8px; background: #fbeee6; color: #d96128; display: flex; align-items: center; justify-content: center; font-size: 14px; }
.est-name { font-size: 15px; font-weight: 550; color: #1e3a7b; letter-spacing: -.3px; white-space: nowrap; }
.lvl-wrap { display: flex; align-items: center; }
.badge { display: inline-block; padding: 2.5px 10px; border-radius: 999px; font-size: 11px; line-height: 14px; font-weight: 600; vertical-align: middle; letter-spacing: 0; }
.b-ter { background: #f2e6e2; color: #6b2a1c; }
.b-pub { background: #e6f4ea; color: #4e9a5f; font-size: 11.5px; padding: 2.5px 11px; }
.b-pri2 { background: #e8eaf0; color: #4b5563; font-size: 11.5px; padding: 2.5px 11px; }
.b-jar { background: #eef6e8; color: #6fa63f; }
.b-pri { background: #fdf1ea; color: #e9a07a; font-weight: 400; width: 183px; margin: 1px 0; }
.b-pri b { color: #e07b3c; font-weight: 600; }
td.acts { padding-left: 8px; }
.act-row { display: flex; align-items: center; justify-content: flex-end; gap: 5px; }
.act-pin { font-size: 16px; color: #4a9c5d; margin: 0 6px 2px 0; }
.act { width: 30px; height: 30px; border: 0; border-radius: 8px; padding: 0; display: flex; align-items: center; justify-content: center; font-size: 14px; }
.edit { background: #f3f4f6; color: #3f4656; }
.del { background: #fdf0f0; color: #c93636; }

.fab { position: fixed; right: 26px; bottom: 26px; width: 65px; height: 65px; border: 0; border-radius: 50%; background: linear-gradient(135deg, #3f9c8a, #2b6c88); color: #fff; font-size: 27px; display: flex; align-items: center; justify-content: center; padding: 0; box-shadow: 0 6px 20px rgba(43,120,130,.35); z-index: 5; }
```
